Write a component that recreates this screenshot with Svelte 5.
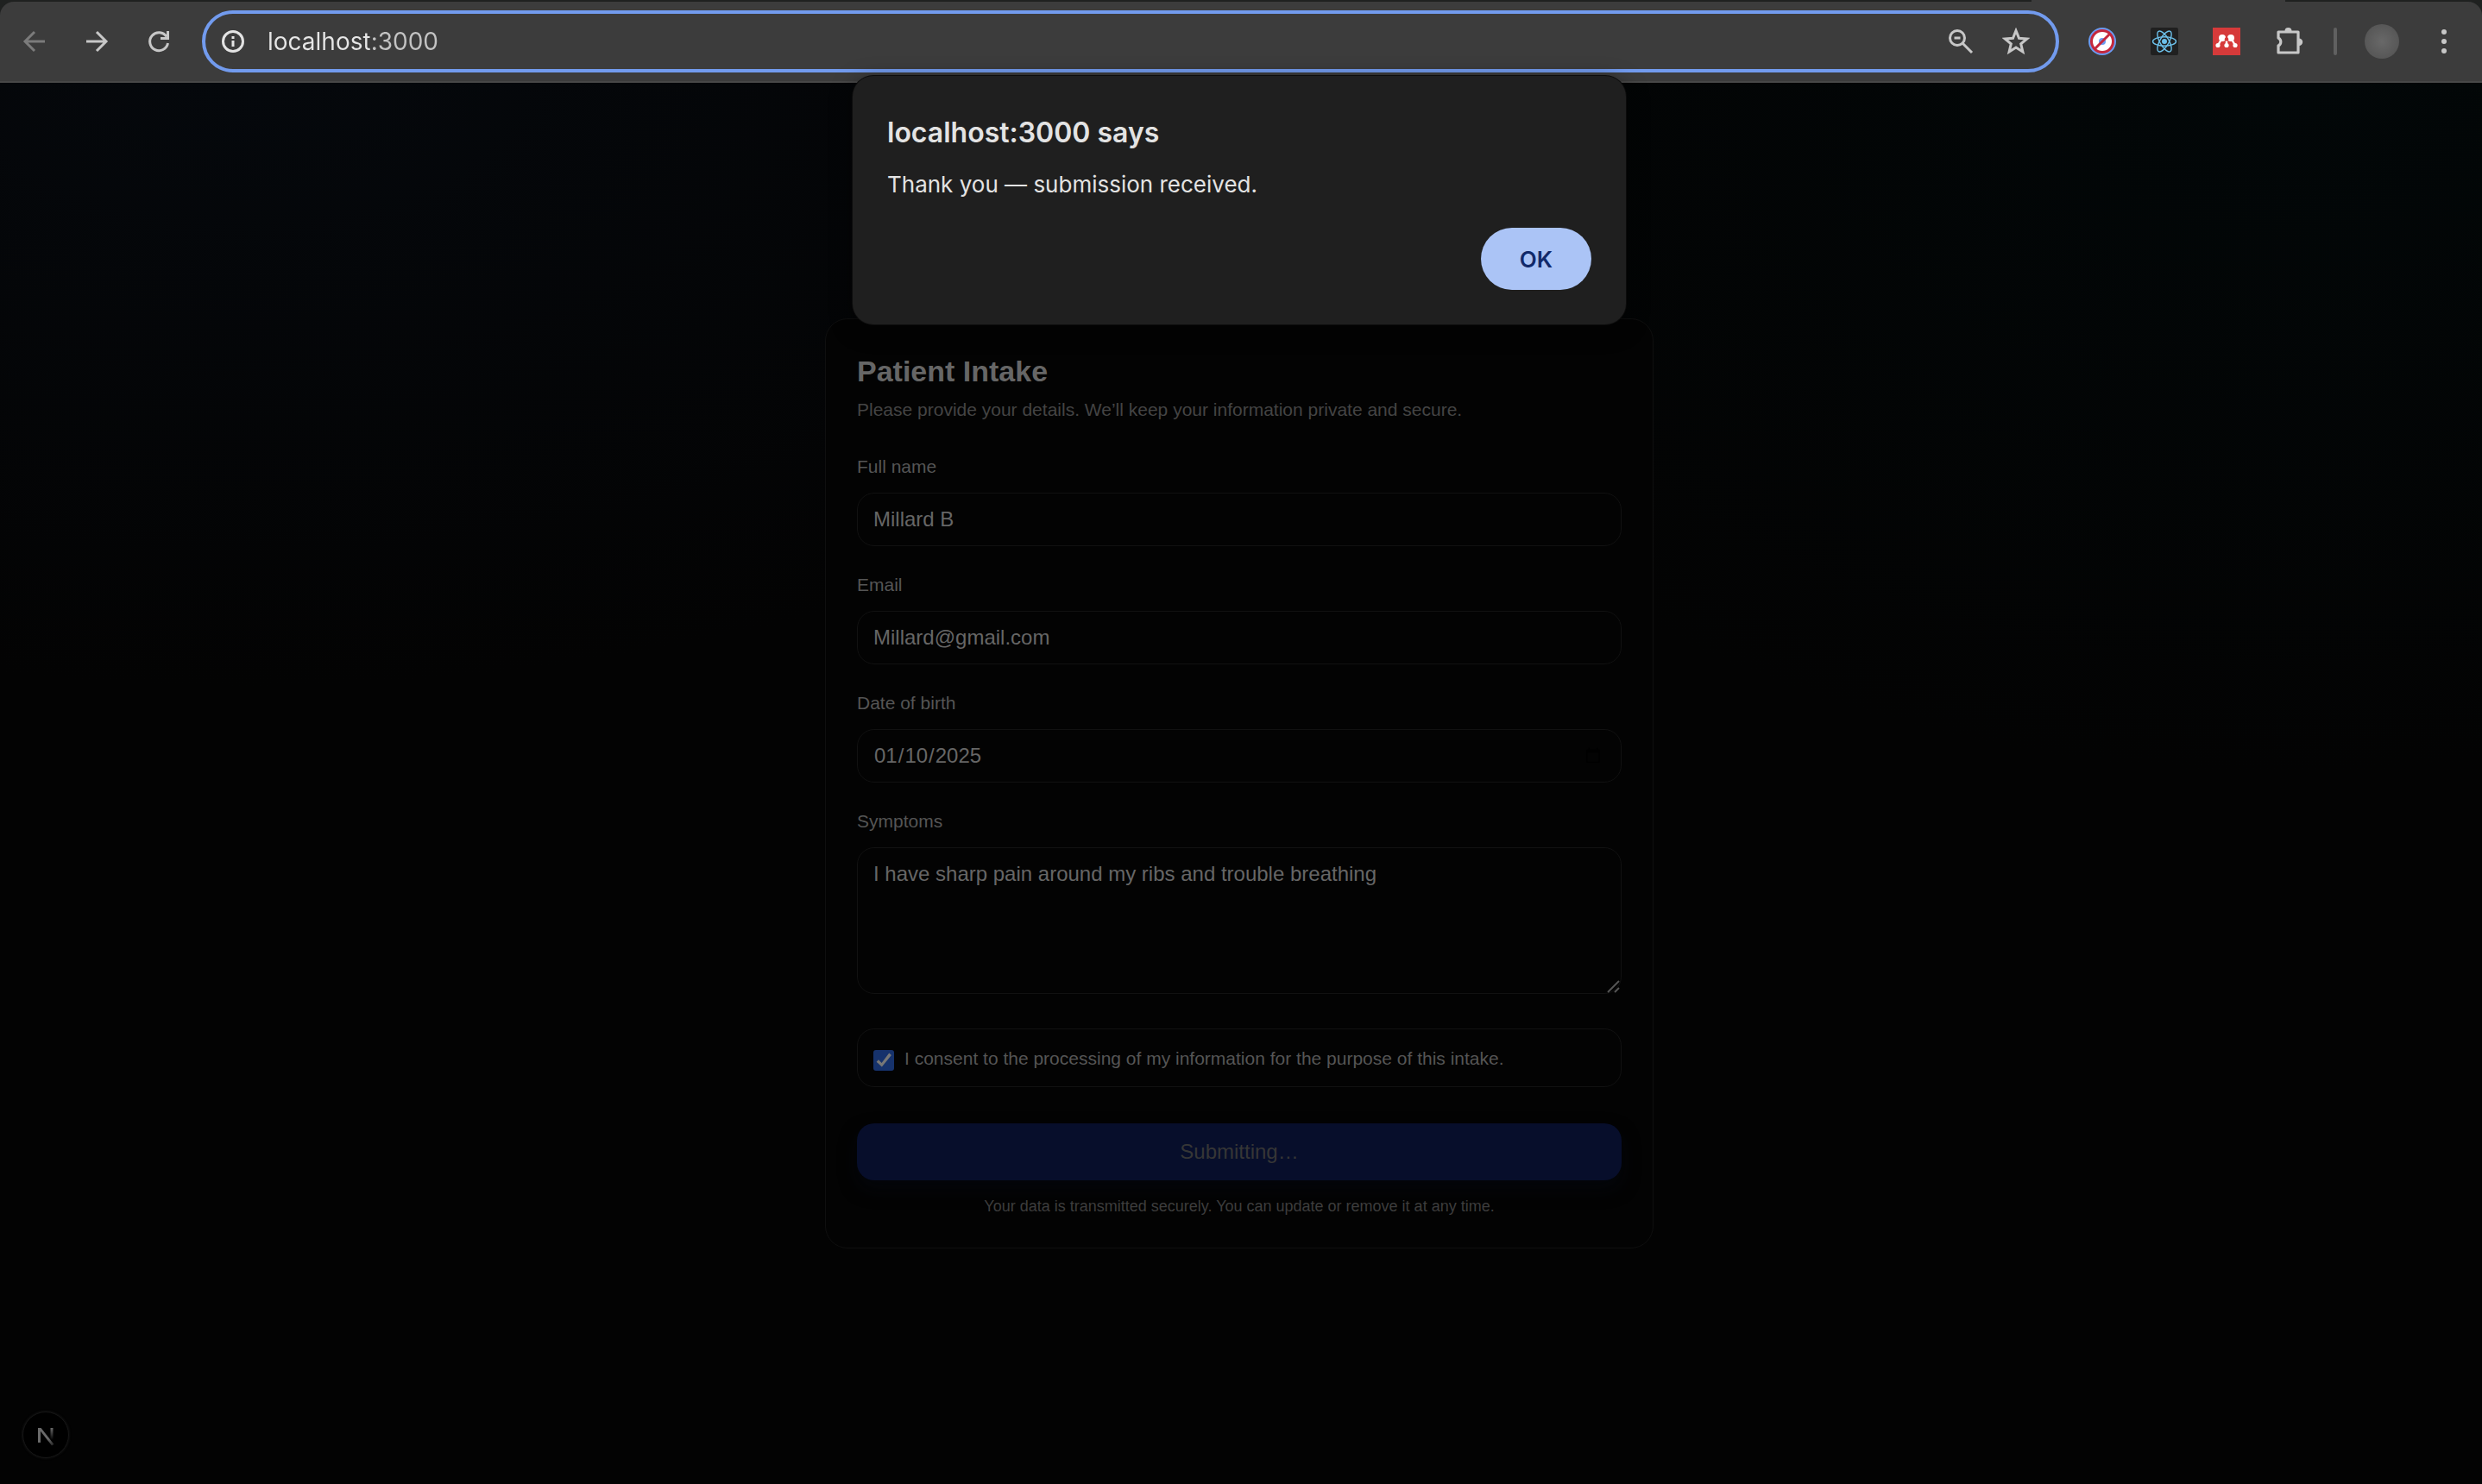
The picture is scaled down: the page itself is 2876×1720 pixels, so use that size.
<script>
  let address = $state('localhost:3000');
  let fullName = $state('Millard B');
  let email = $state('Millard@gmail.com');
  let birth = $state('2025-01-10');
  let symptoms = $state('I have sharp pain around my ribs and trouble breathing');
  let consent = $state(true);
</script>

<div class="window">
  <header class="frame">
    <div class="toolbar">
      <nav class="nav" aria-label="Navigation">
        <button class="icon faded" aria-label="Back">
          <svg viewBox="0 0 32 32"><path d="M28 16H6M16 5 5 16l11 11" /></svg>
        </button>
        <button class="icon" aria-label="Forward">
          <svg viewBox="0 0 32 32"><path d="M4 16h22M16 5l11 11-11 11" /></svg>
        </button>
        <button class="icon" aria-label="Reload">
          <svg viewBox="0 0 32 32"><path d="M25 10.500A10.500 10.500 0 1 0 26.500 18M26.500 4v8.500H18" /></svg>
        </button>
      </nav>

      <div class="omnibox">
        <button class="icon bright" aria-label="Site information">
          <svg viewBox="0 0 32 32"><circle cx="16" cy="16" r="11.500" /><path d="M16 15v7M16 10v3" /></svg>
        </button>
        <input class="address" aria-label="Address" bind:value={address} />
        <button class="icon" aria-label="Zoom">
          <svg viewBox="0 0 32 32"><circle cx="12" cy="12" r="8.500" /><path d="M18 18l11 11M8.500 12h7" /></svg>
        </button>
        <button class="icon star" aria-label="Bookmark">
          <svg viewBox="0 0 32 32"><path d="M16 3.500l3.500 8.700 9.300.7-7.100 6 2.200 9.100-7.900-4.900-7.900 4.900 2.200-9.100-7.100-6 9.300-.7z" /></svg>
        </button>
      </div>

      <div class="extensions">
        <button class="icon" aria-label="Blocker">
          <svg viewBox="0 0 32 32" class="art">
            <circle cx="16" cy="16" r="16" fill="#6b9bf2" />
            <circle cx="16" cy="16" r="14" fill="#c4273c" />
            <circle cx="16" cy="16" r="11" fill="#fff" />
            <circle cx="16" cy="16" r="4" fill="#6b9bf2" />
            <path d="M7 25L25 7" stroke="#c4273c" stroke-width="3" />
          </svg>
        </button>
        <button class="icon" aria-label="React Developer Tools">
          <svg viewBox="0 0 32 32" class="art">
            <rect width="32" height="32" rx="2" fill="#202020" />
            <g fill="none" stroke="#6cc0ea" stroke-width="1.400">
              <ellipse cx="16" cy="16" rx="13.500" ry="5.200" />
              <ellipse cx="16" cy="16" rx="13.500" ry="5.200" transform="rotate(60 16 16)" />
              <ellipse cx="16" cy="16" rx="13.500" ry="5.200" transform="rotate(120 16 16)" />
            </g>
            <circle cx="16" cy="16" r="3" fill="#6cc0ea" />
          </svg>
        </button>
        <button class="icon" aria-label="Mendeley">
          <svg viewBox="0 0 32 32" class="art">
            <rect width="32" height="32" fill="#d63a3a" />
            <path d="M6 20.500l5-8.500 5 2 5-2 5 8.500M16 14v6" fill="none" stroke="#fff" stroke-width="2.400" />
            <g fill="#fff">
              <circle cx="11" cy="12" r="4" /><circle cx="21" cy="12" r="4" />
              <circle cx="6" cy="20.500" r="2.600" /><circle cx="16" cy="20.500" r="2.600" /><circle cx="26" cy="20.500" r="2.600" />
            </g>
            <circle cx="16" cy="13.500" r="2.300" fill="#d63a3a" />
          </svg>
        </button>
        <button class="icon puzzle" aria-label="Extensions">
          <svg viewBox="0 0 36 36">
            <path d="M4 8h23v24H4v-8a5 5 0 0 0 0-9z" transform="translate(0 -1)" stroke-width="3.200" stroke-linejoin="round" />
            <path class="solid" d="M11.500 6a4 4 0 0 1 8 0zM28 14.500a4.200 4.200 0 0 1 0 8.400z" />
          </svg>
        </button>
      </div>
      <span class="divider"></span>
      <button class="avatar" aria-label="Profile"></button>
      <button class="icon" aria-label="Menu">
        <svg viewBox="0 0 32 32"><g class="solid"><circle cx="16" cy="5" r="3" /><circle cx="16" cy="16" r="3" /><circle cx="16" cy="27" r="3" /></g></svg>
      </button>
    </div>
  </header>

  <main class="page">
    <form class="card" onsubmit={(e) => e.preventDefault()}>
      <h1>Patient Intake</h1>
      <p class="lead">Please provide your details. We’ll keep your information private and secure.</p>

      <div class="field">
        <label for="name">Full name</label>
        <input id="name" type="text" bind:value={fullName} />
      </div>
      <div class="field">
        <label for="email">Email</label>
        <input id="email" type="email" bind:value={email} />
      </div>
      <div class="field">
        <label for="birth">Date of birth</label>
        <input id="birth" type="date" bind:value={birth} />
      </div>
      <div class="field">
        <label for="symptoms">Symptoms</label>
        <div class="area">
          <textarea id="symptoms" bind:value={symptoms}></textarea>
          <svg class="grip" viewBox="0 0 16 16" aria-hidden="true"><path d="M2 15L15 2M10 15l5-5" /></svg>
        </div>
      </div>

      <label class="consent">
        <input type="checkbox" bind:checked={consent} />
        <span>I consent to the processing of my information for the purpose of this intake.</span>
      </label>

      <button class="submit" type="submit">Submitting…</button>
      <p class="note">Your data is transmitted securely. You can update or remove it at any time.</p>
    </form>
  </main>

  <div class="overlay">
    <div class="alert" role="alertdialog" aria-labelledby="alert-title" aria-describedby="alert-text">
      <h2 id="alert-title">localhost:3000 says</h2>
      <p id="alert-text">Thank you — submission received.</p>
      <button class="ok">OK</button>
    </div>
  </div>

  <button class="badge" aria-label="Open Next.js Dev Tools">
    <svg viewBox="0 0 52 52">
      <defs>
        <linearGradient id="diag" x1="30" y1="30" x2="37" y2="39" gradientUnits="userSpaceOnUse">
          <stop offset="0" stop-color="#6a6a6a" /><stop offset="1" stop-color="#6a6a6a" stop-opacity="0.200" />
        </linearGradient>
        <linearGradient id="stem" x1="0" y1="18" x2="0" y2="32" gradientUnits="userSpaceOnUse">
          <stop offset="0" stop-color="#6a6a6a" /><stop offset="1" stop-color="#6a6a6a" stop-opacity="0" />
        </linearGradient>
      </defs>
      <path d="M17 18h3v17h-3z" fill="#6a6a6a" />
      <path d="M17 18h3.500L35.500 37l-2.500 1.500z" fill="url(#diag)" />
      <path d="M31.500 18h3v14h-3z" fill="url(#stem)" />
    </svg>
  </button>
</div>

<style>
  :global(body) {
    margin: 0;
    background: #030303;
  }
  .window {
    position: relative;
    display: flex;
    flex-direction: column;
    min-height: 100vh;
    font-family: 'Liberation Sans', Arial, sans-serif;
  }
  button {
    padding: 0;
    border: 0;
    background: none;
    font-family: inherit;
  }
  h1, h2, p { margin: 0; }
  input, textarea { font-family: inherit; outline: 0; }

  .frame {
    position: relative;
    padding-top: 2px;
    background: #1f2120;
  }
  /* foot of the active tab, joined to the toolbar */
  .frame::before {
    content: '';
    position: absolute;
    top: 0;
    right: 228px;
    width: 294px;
    height: 2px;
    background: #3c3c3c;
  }
  .toolbar {
    box-sizing: border-box;
    display: flex;
    align-items: center;
    height: 94px;
    padding: 0 28px 0 24px;
    border-bottom: 2px solid #474747;
    border-radius: 16px 16px 0 0;
    background: #3c3c3c;
  }
  .nav {
    display: flex;
    gap: 40px;
    margin-right: 34px;
  }
  .icon {
    flex: none;
    width: 32px;
    height: 32px;
  }
  .icon svg {
    display: block;
    width: 100%;
    height: 100%;
    fill: none;
    stroke: #c7c7c7;
    stroke-width: 3;
  }
  .icon .art { stroke: none; }
  .icon .solid { fill: #c7c7c7; stroke: none; }
  .faded svg { stroke: #7b7b7b; }
  .bright svg { stroke: #e3e3e3; }
  .omnibox {
    box-sizing: border-box;
    flex: 1;
    display: flex;
    align-items: center;
    height: 72px;
    padding: 0 30px 0 16px;
    border: 4px solid #729bee;
    border-radius: 36px;
  }
  .address {
    flex: 1;
    min-width: 0;
    margin-left: 24px;
    padding: 0;
    border: 0;
    background: linear-gradient(90deg, #e6e6e6 118px, #c3c3c3 118px) text;
    color: transparent;
    font: 28px/36px Inter, sans-serif;
  }
  .star { margin-left: 32px; }
  .extensions {
    display: flex;
    align-items: center;
    gap: 40px;
    margin-left: 34px;
  }
  .puzzle { width: 36px; height: 36px; }
  .divider {
    width: 4px;
    height: 32px;
    margin: 0 32px;
    border-radius: 2px;
    background: #606060;
  }
  .avatar {
    width: 40px;
    height: 40px;
    margin-right: 36px;
    border-radius: 50%;
    background: radial-gradient(#686868, #505050);
  }

  .page {
    flex: 1;
    display: flex;
    justify-content: center;
    align-items: flex-start;
    padding: 273px 4px 100px 0;
    background:
      radial-gradient(ellipse 1400px 700px at 10% 0%, #05080c, transparent),
      radial-gradient(ellipse 1200px 800px at 92% 0%, #020708, transparent),
      #030303;
  }
  .card {
    box-sizing: border-box;
    display: flex;
    flex-direction: column;
    width: 100%;
    max-width: 960px;
    padding: 40px 36px 36px;
    border: 1px solid #0f0f0f;
    border-radius: 26px;
    background: #030303;
  }
  h1 {
    color: #666;
    font-size: 34px;
    line-height: 40px;
  }
  .lead {
    margin: 12px 0 40px;
    color: #444;
    font-size: 21px;
    line-height: 26px;
  }
  .field {
    display: flex;
    flex-direction: column;
    gap: 18px;
    margin-bottom: 32px;
  }
  label {
    color: #555;
    font-size: 21px;
    line-height: 25px;
  }
  .field input, textarea {
    box-sizing: border-box;
    width: 100%;
    height: 62px;
    padding: 0 18px;
    border: 1px solid #111;
    border-radius: 20px;
    background: #030303;
    color: #666;
    font-size: 24px;
  }
  .field input::-webkit-calendar-picker-indicator {
    width: 20px;
    height: 20px;
    padding: 0 4px;
  }
  .area { position: relative; display: flex; }
  textarea {
    height: 170px;
    padding: 16px 18px;
    line-height: 28px;
    resize: none;
  }
  .grip {
    position: absolute;
    right: 2px;
    bottom: 1px;
    width: 16px;
    height: 16px;
    stroke: #555;
    stroke-width: 2;
  }
  .consent {
    display: flex;
    align-items: center;
    gap: 12px;
    height: 66px;
    margin-top: 8px;
    padding: 0 18px;
    border: 1px solid #111;
    border-radius: 20px;
  }
  .consent input {
    appearance: none;
    width: 24px;
    height: 24px;
    margin: 6px 0 0;
    border-radius: 3px;
    background: #16326c;
    display: grid;
  }
  .consent input:checked::before {
    content: '';
    background: #777;
    clip-path: polygon(15% 57%, 25% 47%, 40% 62%, 76% 15%, 87% 25%, 41% 81%);
  }
  .submit {
    height: 66px;
    margin-top: 42px;
    border-radius: 20px;
    background: #070e2b;
    box-shadow: 0 10px 20px #04060b;
    color: #363636;
    font-size: 24px;
  }
  .note {
    margin-top: 18px;
    color: #3d3d3d;
    font-size: 18px;
    line-height: 24px;
    text-align: center;
  }

  .overlay {
    position: absolute;
    top: 88px;
    left: 0;
    right: 4px;
    display: flex;
    justify-content: center;
  }
  .alert {
    box-sizing: border-box;
    display: flex;
    flex-direction: column;
    width: 896px;
    max-width: 100%;
    padding: 44px 40px 40px;
    border-radius: 24px;
    background: #1f1f1f;
    box-shadow: 0 0 0 1px #0c0c0c, 0 6px 24px #0008;
    color: #e3e3e3;
    font-family: Inter, sans-serif;
  }
  h2 {
    font-size: 32px;
    font-weight: 600;
    line-height: 44px;
  }
  #alert-text {
    margin: 20px 0 32px;
    font-size: 26px;
    line-height: 36px;
  }
  .ok {
    align-self: flex-end;
    width: 128px;
    height: 72px;
    border-radius: 36px;
    background: #abc4f6;
    color: #11296a;
    font-size: 26px;
    font-weight: 600;
  }
  .badge {
    position: fixed;
    left: 26px;
    bottom: 30px;
    width: 54px;
    height: 54px;
    border: 1px solid #161616;
    border-radius: 50%;
    background: #000;
    box-shadow: 0 0 2px 1px #0e0e0e;
  }
  .badge svg { display: block; }
</style>
